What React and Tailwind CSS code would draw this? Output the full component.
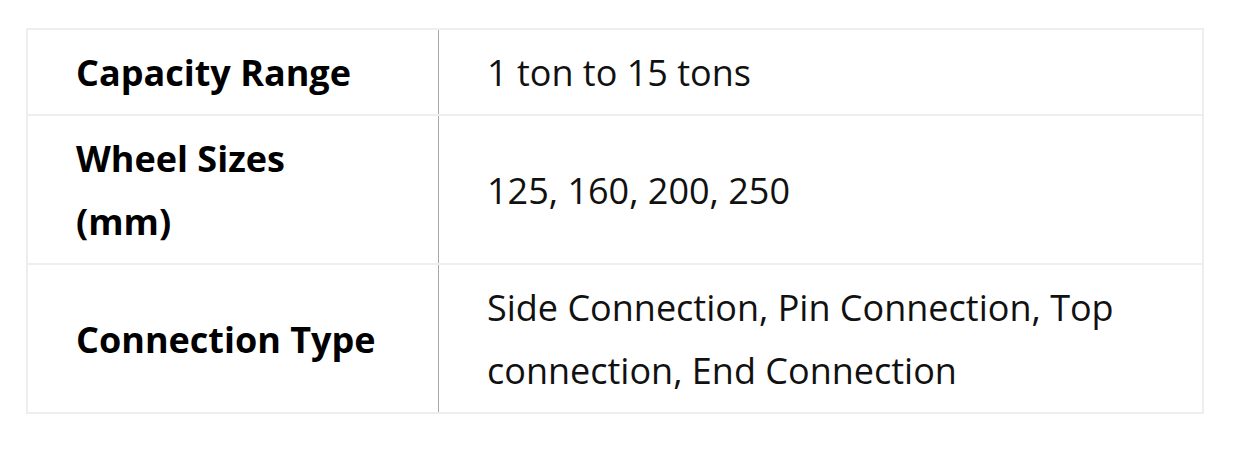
import React from "react";

const rows = [
  { label: "Capacity Range", value: "1 ton to 15 tons" },
  { label: "Wheel Sizes (mm)", value: "125, 160, 200, 250" },
  { label: "Connection Type", value: "Side Connection, Pin Connection, Top connection, End Connection" },
];

export default function App() {
  return (
    <div className="min-h-[450px] bg-white pt-[28px] pl-[26px]" style={{ fontFamily: '"Open Sans", "Liberation Sans", sans-serif' }}>
      <div className="w-[1178px] border-2 border-[#eeeeee]">
        {rows.map((row, i) => (
          <div
            key={row.label}
            className={`grid grid-cols-[411px_1fr] ${i > 0 ? "border-t-2 border-[#eeeeee]" : ""}`}
          >
            <div className="flex items-center border-r border-[#a8a8a8] pl-[48px] pr-[56px] pt-[11px] pb-[10px] text-[36px] leading-[63px] font-bold text-black">
              {row.label}
            </div>
            <div className="flex items-center pl-[48px] pr-[48px] pt-[11px] pb-[10px] text-[36px] leading-[63px] text-[#111111]">
              {row.value}
            </div>
          </div>
        ))}
      </div>
    </div>
  );
}
